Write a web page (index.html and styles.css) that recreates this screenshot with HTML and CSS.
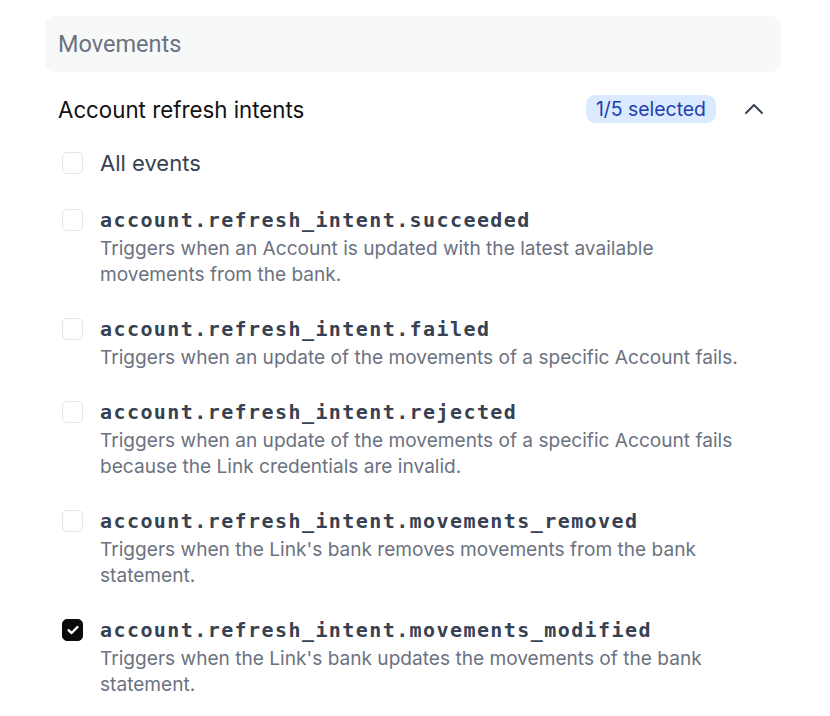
FILE: index.html
```html
<!DOCTYPE html>
<html>
<head>
<meta charset="utf-8">
<link rel="stylesheet" href="styles.css">
</head>
<body>
<div class="panel">
  <div class="group-header">Movements</div>
  <div class="section-row">
    <span class="section-title">Account refresh intents</span>
    <span class="section-right">
      <span class="badge">1/5 selected</span>
      <svg class="chevron" width="20" height="12" viewBox="0 0 20 12"><path d="M2 10 L10 2 L18 10" fill="none" stroke="#374151" stroke-width="2" stroke-linecap="round" stroke-linejoin="round"/></svg>
    </span>
  </div>
  <div class="list">
    <div class="item">
      <span class="cb"></span>
      <div class="body"><div class="all">All events</div></div>
    </div>
    <div class="item">
      <span class="cb"></span>
      <div class="body">
        <div class="code">account.refresh_intent.succeeded</div>
        <div class="desc">Triggers when an Account is updated with the latest available movements from the bank.</div>
      </div>
    </div>
    <div class="item">
      <span class="cb"></span>
      <div class="body">
        <div class="code">account.refresh_intent.failed</div>
        <div class="desc">Triggers when an update of the movements of a specific Account fails.</div>
      </div>
    </div>
    <div class="item">
      <span class="cb"></span>
      <div class="body">
        <div class="code">account.refresh_intent.rejected</div>
        <div class="desc">Triggers when an update of the movements of a specific Account fails because the Link credentials are invalid.</div>
      </div>
    </div>
    <div class="item">
      <span class="cb"></span>
      <div class="body">
        <div class="code">account.refresh_intent.movements_removed</div>
        <div class="desc">Triggers when the Link's bank removes movements from the bank statement.</div>
      </div>
    </div>
    <div class="item">
      <span class="cb checked"><svg width="14" height="12" viewBox="0 0 14 12"><path d="M2.5 6.2 L5.6 9 L11.5 3" fill="none" stroke="#fff" stroke-width="2.4" stroke-linecap="round" stroke-linejoin="round"/></svg></span>
      <div class="body">
        <div class="code">account.refresh_intent.movements_modified</div>
        <div class="desc">Triggers when the Link's bank updates the movements of the bank statement.</div>
      </div>
    </div>
  </div>
</div>
</body>
</html>
```
FILE: styles.css
```css
* { box-sizing: border-box; }
html, body { margin: 0; padding: 0; background: #fff; }
body { font-family: Inter, "Noto Sans", sans-serif; color: #111827; }
.panel { width: 736px; margin: 16px 0 0 45px; }
.group-header {
  height: 56px;
  background: #f7f9f9;
  border-radius: 10px;
  padding-left: 13px;
  display: flex;
  align-items: center;
  font-family: Roboto, "Liberation Sans", sans-serif;
  font-size: 23.5px;
  color: #6b7280;
}
.section-row {
  margin-top: 17px;
  height: 40px;
  display: flex;
  align-items: center;
  justify-content: space-between;
  padding: 0 17px 0 13px;
}
.section-title { font-size: 22.3px; color: #111; }
.section-right { display: flex; align-items: center; gap: 28px; }
.badge {
  background: #dbeafe;
  color: #1e40af;
  font-size: 19.4px;
  height: 28px;
  padding: 0 10px;
  border-radius: 9px;
  display: flex;
  align-items: center;
}
.chevron { display: block; }
.list { padding-left: 17px; margin-top: 19px; display: flex; flex-direction: column; gap: 27px; }
.item { display: flex; align-items: flex-start; gap: 17px; }
.cb {
  flex: none;
  width: 21px;
  height: 22px;
  margin-top: 4px;
  border: 1px solid #e2e4e7;
  border-radius: 5px;
  background: #fff;
  display: flex;
  align-items: center;
  justify-content: center;
}
.cb.checked { background: #0b0b0c; border-color: #0b0b0c; }
.cb svg { display: block; }
.body { min-width: 0; }
.all { font-size: 22px; line-height: 30px; color: #374151; }
.code {
  font-family: "DejaVu Sans Mono", "Liberation Mono", monospace;
  font-weight: bold;
  font-size: 20px;
  letter-spacing: 1.42px;
  line-height: 30px;
  color: #374151;
}
.desc {
  font-size: 19.1px;
  line-height: 26px;
  color: #6b7280;
  max-width: 660px;
}
```
